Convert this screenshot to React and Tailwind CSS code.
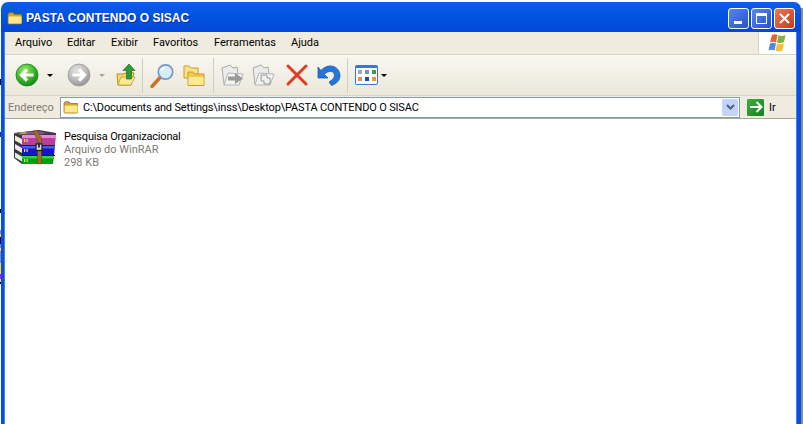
const uiFont = 'font-["Roboto",sans-serif]';

function FolderIcon({ size = 16, className = '' }) {
  return (
    <svg width={size} height={size} viewBox="0 0 16 16" className={className}>
      <path d="M1 4.500 2 2.800h4.200l1 1.700h7.300V13a1 1 0 0 1-1 1H2a1 1 0 0 1-1-1z" fill="#d9a520" stroke="#9a7412" strokeWidth="0.8" />
      <path d="M1.600 6.500h13v6.600a.5.5 0 0 1-.5.5H2.100a.5.5 0 0 1-.5-.5z" fill="#fde88f" />
    </svg>
  );
}

function RoundArrow({ dir, disabled }) {
  const id = disabled ? 'navGray' : 'navGreen';
  return (
    <svg width="24" height="24" viewBox="0 0 24 24">
      <defs>
        <radialGradient id={id} cx="40%" cy="30%" r="75%">
          <stop offset="0%" stopColor={disabled ? '#e4e4e4' : '#9fe86a'} />
          <stop offset="55%" stopColor={disabled ? '#bcbcbc' : '#3fb82c'} />
          <stop offset="100%" stopColor={disabled ? '#8f8f8f' : '#0f7d18'} />
        </radialGradient>
      </defs>
      <circle cx="12" cy="12" r="11" fill={`url(#${id})`} stroke={disabled ? '#999' : '#18852a'} strokeWidth="0.8" />
      <path
        d={dir === 'left' ? 'M18.500 12H7M12 6.500 6.500 12l5.500 5.500' : 'M5.500 12H17M12 6.500l5.500 5.500-5.500 5.500'}
        fill="none"
        stroke="#fff"
        strokeWidth="3.200"
      />
    </svg>
  );
}

function Caret({ gray }) {
  return <span className={`inline-block w-0 h-0 border-x-[3px] border-x-transparent border-t-[3px] ${gray ? 'border-t-[#a8a8a0]' : 'border-t-black'}`} />;
}

function UpFolder() {
  return (
    <svg width="20" height="24" viewBox="0 0 20 24">
      <path d="M1 11h6l6-2 5 1-3 12H2z" fill="#f6d76b" stroke="#b88d1c" />
      <path d="M2 22l3-8h14l-4 8z" fill="#fbe995" stroke="#c29a2a" strokeWidth="0.8" />
      <path d="M13 1l6 6.500h-3.500V16h-5V7.500H7z" fill="#2f9b36" stroke="#17702a" strokeWidth="0.7" />
    </svg>
  );
}

function SearchIcon() {
  return (
    <svg width="25" height="25" viewBox="0 0 25 25">
      <path d="M2 23.500 10.500 14" stroke="#c9732a" strokeWidth="3.400" strokeLinecap="round" />
      <circle cx="15.500" cy="9" r="7.200" fill="#d9ecfb" stroke="#7497c9" strokeWidth="1.700" />
      <path d="M11 8a5 5 0 0 1 4-3.500" stroke="#fff" strokeWidth="1.600" fill="none" />
    </svg>
  );
}

function FoldersIcon() {
  return (
    <svg width="22" height="23" viewBox="0 0 22 23">
      <path d="M1 2h5l1.500 2H15v10H1z" fill="#fbe28a" stroke="#c79a23" />
      <path d="M5 8h5l1.500 2H21v11.500H5z" fill="#f4c84e" stroke="#c79a23" />
      <path d="M5.500 13h15v8h-15z" fill="#fce898" />
    </svg>
  );
}

function MoveIcon({ copy }) {
  return (
    <svg width="23" height="23" viewBox="0 0 23 23">
      <path d="M1 4l8-3 3 3 4-1 1 6-13 11H3z" fill="#ececec" stroke="#a9a9a9" />
      <path d="M3 21 7 9l15 1-4 11z" fill="#f3f3f1" stroke="#b4b4b4" />
      {copy ? (
        <path d="M9 11h6v3h3v6h-6v-3H9z" fill="#efefef" stroke="#9a9a9a" />
      ) : (
        <path d="M7 12.500h7V9l8 5.500-8 5.500v-3.500H7z" fill="#9a9a9a" />
      )}
    </svg>
  );
}

function DeleteIcon() {
  return (
    <svg width="24" height="24" viewBox="0 0 24 24">
      <path d="M3 3 21 21M21 3 3 21" stroke="#df3b22" strokeWidth="3" strokeLinecap="round" />
    </svg>
  );
}

function UndoIcon() {
  return (
    <svg width="25" height="23" viewBox="0 0 25 23">
      <path d="M2 3v11h10L8.500 10.500C10 8 14 6.800 16.500 8c2.800 1.400 2.500 5.600-.5 8l-3 2 2.500 3.500c5-1.700 9-5.500 8.500-10.500C23.500 4.700 18 1.200 13 2c-2.500.4-6 2-8 4.500z" fill="#2576d8" stroke="#134fa8" strokeWidth="0.7" />
    </svg>
  );
}

function ViewsIcon() {
  const cells = ['#9aa9c9', '#6f95b8', '#3a9a4a', '#e98a5f', '#1f4fa3', '#d9a030'];
  return (
    <div className="w-[23px] h-[20px] bg-white border border-[#3b78c9] border-t-[3px] rounded-[2px] pt-[2px] flex justify-center">
      <div className="grid grid-cols-3 gap-x-[3px] gap-y-[3px] h-[11px]">
        {cells.map((c) => (
          <span key={c} className="w-[4px] h-[4px]" style={{ backgroundColor: c }} />
        ))}
      </div>
    </div>
  );
}

function WinLogo() {
  return (
    <svg width="20" height="20" viewBox="0 0 20 20">
      <path d="M4 2c2-1 3.500-1 5.500 0L8 9.500C6 8.500 4 8.500 2 9.500z" fill="#e8632e" />
      <path d="M10.500 2.300c2 1 4 1 7-.3L16 9c-2.500 1.300-4.500 1.300-7 .5z" fill="#7cb342" />
      <path d="M2 10.500c2-1 4-1 6 0l-1.500 7c-2-1-4-1-6 0z" fill="#4a8ae0" />
      <path d="M9 10.500c2.500 1 4.500 1 7-.3l-1.500 7c-2.500 1.300-4.500 1.300-7 .5z" fill="#fbc02d" />
    </svg>
  );
}

function WinRarIcon() {
  return (
    <svg width="43" height="35" viewBox="0 0 43 35" className="shrink-0">
      {/* lid and spine */}
      <path d="M0 3 25 0l17 3v2H8z" fill="#4a3350" />
      <path d="M3 2.600 24 1l9 2-7 1.500H7z" fill="#7a5a78" />
      <path d="M4 2.800 11 2l3 1.500-6 .6z" fill="#b0a860" />
      <path d="M0 3l8 2v29L0 28z" fill="#3a3640" />
      <path d="M1 5.500l7 3.500v5.500l-7-4zM1 14l7 4v5l-7-4zM1 22.500l7 4v5l-7-4z" fill="#ecebdc" />
      {/* volumes */}
      <path d="M8 5h34l-1 10H8z" fill="#b83ea0" />
      <path d="M8 5h34v3H8z" fill="#e68bd2" />
      <path d="M8 16h33l-1 9H8z" fill="#1414d0" />
      <path d="M8 16h33v2.500H8z" fill="#4a5cf0" />
      <path d="M8 26h32l-1 8H8z" fill="#00a010" />
      <path d="M8 26h32v2.500H8z" fill="#34d040" />
      <path d="M8 15h33v1H8zM8 25h33v1H8z" fill="#1a1a1a" />
      <path d="M10 9h1.200v3H10zM12.500 9h1.200v3h-1.200zM10 19h1.200v3H10zM12.500 19h1.200v3h-1.200zM10 29h1.200v3H10zM12.500 29h1.200v3h-1.200z" fill="#e8e15a" />
      {/* strap and lock */}
      <path d="M19.500 1l3-1 5 8v26h-4V11z" fill="#a36a2a" stroke="#5a3a12" strokeWidth="0.5" />
      <rect x="22" y="14" width="6" height="6.500" fill="#d8d8d8" stroke="#222" strokeWidth="1.300" />
      <rect x="24" y="12.500" width="2" height="5" fill="#333" />
    </svg>
  );
}

function Separator({ className = '' }) {
  return <div className={`w-px h-[35px] bg-[#d2cfbf] shrink-0 ${className}`} />;
}

const menuItems = [
  ['Arquivo', 'w-[52px]'],
  ['Editar', 'w-[44px]'],
  ['Exibir', 'w-[42px]'],
  ['Favoritos', 'w-[61px]'],
  ['Ferramentas', 'w-[77px]'],
  ['Ajuda', 'w-[40px]'],
];

// pixels left by the desktop behind the window, x=0
const desktopBits = [
  ['h-[79px]', 'bg-white'],
  ['h-[6px]', 'bg-black'],
  ['h-[47px]', 'bg-white'],
  ['h-[5px]', 'bg-[#1c2f80]'],
  ['h-[72px]', 'bg-white'],
  ['h-[4px]', 'bg-black'],
  ['h-[17px]', 'bg-white'],
  ['h-[4px]', 'bg-[#8a8aa0]'],
  ['h-[3px]', 'bg-[#ffe000]'],
  ['h-[7px]', 'bg-[#101030]'],
  ['h-[4px]', 'bg-[#8a8aa0]'],
  ['h-[3px]', 'bg-[#ffe000]'],
  ['h-[12px]', 'bg-[#8a8aa0]'],
  ['h-[11px]', 'bg-[#ffe000]'],
  ['h-[5px]', 'bg-[#e000f0]'],
  ['h-[3px]', 'bg-[#ffe000]'],
  ['h-[2px]', 'bg-black'],
];

export default function App() {
  return (
    <div className={`w-[803px] h-[424px] overflow-hidden flex bg-white text-[11px] text-black ${uiFont}`}>
      <div className="w-px shrink-0 flex flex-col">
        {desktopBits.map(([h, bg], i) => (
          <div key={i} className={`${h} ${bg}`} />
        ))}
      </div>

      <div className="w-[800px] shrink-0 h-full pt-[2px] flex flex-col">
        {/* title bar */}
        <div className="h-[30px] shrink-0 rounded-t-[7px] bg-gradient-to-b from-[#0a5fe6] via-[#0052e0] to-[#0645d8] flex items-center pl-[6px] pr-[6px] pt-[2px]">
          <FolderIcon size={16} />
          <span className='ml-[3px] flex-1 font-["Liberation_Sans",sans-serif] font-bold text-[12px] text-white [text-shadow:1px_1px_0_#0f2f9c]'>
            PASTA CONTENDO O SISAC
          </span>
          <div className="flex gap-[2px]">
            <div className="w-[21px] h-[21px] rounded-[3px] border border-white bg-gradient-to-br from-[#5a86ee] to-[#2450cf] relative">
              <span className="absolute left-[5px] bottom-[4px] w-[8px] h-[3px] bg-white" />
            </div>
            <div className="w-[21px] h-[21px] rounded-[3px] border border-white bg-gradient-to-br from-[#5a86ee] to-[#2450cf] flex items-center justify-center">
              <span className="w-[11px] h-[11px] border border-white border-t-[3px]" />
            </div>
            <div className="w-[21px] h-[21px] rounded-[3px] border border-white bg-gradient-to-br from-[#e8795a] to-[#c23a18] flex items-center justify-center">
              <svg width="13" height="13" viewBox="0 0 13 13">
                <path d="M2 2l9 9M11 2l-9 9" stroke="#fff" strokeWidth="2" />
              </svg>
            </div>
          </div>
        </div>

        <div className="flex-1 min-h-0 border-l-[3px] border-r-4 border-[#0a4fe4] flex flex-col">
          <div className="flex-1 min-h-0 border-x border-[#3f82ea] flex flex-col">
            {/* menu bar */}
            <div className="h-[23px] shrink-0 bg-[#efebde] border-b border-[#d8d4c4] flex">
              <div className="flex-1 flex items-center pl-[10px] pt-px">
                {menuItems.map(([label, w]) => (
                  <span key={label} className={w}>{label}</span>
                ))}
              </div>
              <div className="w-[38px] bg-white border-l border-[#d8d4c4] flex items-center justify-center">
                <WinLogo />
              </div>
            </div>

            {/* toolbar */}
            <div className="h-[41px] shrink-0 bg-gradient-to-b from-[#f8f7f1] to-[#ebe8d9] border-b border-[#d8d4c4] flex items-center pl-[10px]">
              <RoundArrow dir="left" />
              <div className="ml-[8px] w-[6px] flex"><Caret /></div>
              <div className="ml-[14px]"><RoundArrow dir="right" disabled /></div>
              <div className="ml-[8px] w-[6px] flex"><Caret gray /></div>
              <div className="ml-[11px]"><UpFolder /></div>
              <Separator className="ml-[6px]" />
              <div className="ml-[7px]"><SearchIcon /></div>
              <div className="ml-[8px]"><FoldersIcon /></div>
              <Separator className="ml-[8px]" />
              <div className="ml-[7px]"><MoveIcon /></div>
              <div className="ml-[8px]"><MoveIcon copy /></div>
              <div className="ml-[10px]"><DeleteIcon /></div>
              <div className="ml-[7px]"><UndoIcon /></div>
              <Separator className="ml-[6px]" />
              <div className="ml-[7px]"><ViewsIcon /></div>
              <div className="ml-[3px] w-[6px] flex"><Caret /></div>
            </div>

            {/* address bar */}
            <div className="h-[22px] shrink-0 bg-[#efebde] flex items-center pl-[3px]">
              <span className="w-[52px] text-[#7f7c73] pt-[2px]">Endereço</span>
              <div className="w-[680px] h-[21px] bg-white border border-[#7f9db9] flex items-center pl-[2px] pr-px">
                <FolderIcon />
                <span className="ml-[4px] flex-1 truncate pt-[3px] tracking-[-0.16px]">C:\Documents and Settings\inss\Desktop\PASTA CONTENDO O SISAC</span>
                <div className="w-[16px] h-[17px] rounded-[2px] bg-[#c3d3fb] flex items-center justify-center">
                  <svg width="9" height="7" viewBox="0 0 9 7">
                    <path d="M1 1l3.500 3.500L8 1" fill="none" stroke="#4d6185" strokeWidth="2" />
                  </svg>
                </div>
              </div>
              <div className="ml-[6px] w-[19px] h-[19px] rounded-[2px] bg-gradient-to-br from-[#3fae3f] to-[#12801f] border border-[#e8f3e0] flex items-center justify-center">
                <svg width="14" height="12" viewBox="0 0 14 12">
                  <path d="M1 6h11M7.500 1l5 5-5 5" fill="none" stroke="#fff" strokeWidth="2" />
                </svg>
              </div>
              <span className="ml-[4px] pt-[2px]">Ir</span>
            </div>

            {/* file list */}
            <div className="flex-1 min-h-0 bg-white border-t border-[#a8a59a] pt-[11px] pl-[9px]">
              <div className="flex items-start">
                <WinRarIcon />
                <div className="ml-[7px] leading-[13px]">
                  <div className="tracking-[-0.18px]">Pesquisa Organizacional</div>
                  <div className="text-[#7f7c73]">Arquivo do WinRAR</div>
                  <div className="text-[#7f7c73]">298 KB</div>
                </div>
              </div>
            </div>
          </div>
        </div>
      </div>

      <div className="w-[2px] shrink-0 bg-[#8c8c8c] mt-[8px]" />
    </div>
  );
}
